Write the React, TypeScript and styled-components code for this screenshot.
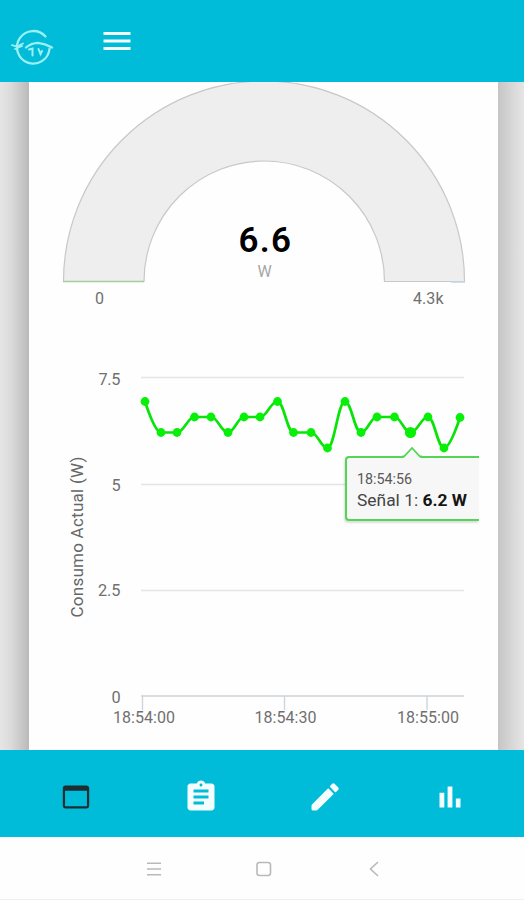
import React from "react";
import styled, { createGlobalStyle } from "styled-components";

const GlobalStyle = createGlobalStyle`
  *, *::before, *::after { box-sizing: border-box; }
  body { margin: 0; background: #fff; font-family: Roboto, "Liberation Sans", sans-serif; }
`;

const Screen = styled.div`
  display: flex;
  flex-direction: column;
  width: 524px;
  height: 900px;
  overflow: hidden;
`;

const Header = styled.header`
  display: flex;
  align-items: center;
  gap: 45px;
  height: 81.5px;
  flex: none;
  padding: 0 9px;
  background: #00bcd9;
  color: #effcff;
`;

const Logo = styled.svg`
  width: 45px;
  height: 42px;
  margin-top: 13px;
  fill: none;
  stroke: #9cf0f5;
  stroke-width: 2.3;
  stroke-linecap: round;
`;

const Icon = styled.svg<{ $tone?: string }>`
  display: block;
  width: 36px;
  height: 36px;
  fill: ${({ $tone }) => $tone ?? "#f4feff"};
`;

const Main = styled.main`
  flex: 1;
  min-height: 0;
  display: flex;
  padding: 0 26px 0 29px;
  overflow: hidden;
  background: linear-gradient(
    90deg,
    #e5e5e5 0,
    #dcdcdc 10px,
    #c9c9c9 21px,
    #b9b9b9 29px,
    #fff 29px,
    #fff 498px,
    #c5c5c5 498px,
    #cdcdcd 504px,
    #dadada 514px,
    #e5e5e5 524px
  );
`;

const Card = styled.section`
  display: flex;
  flex-direction: column;
  flex: 1;
  background: #fefefe;
`;

const GaugeDrawing = styled.svg`
  display: block;
  width: 469px;
  height: 248.5px;
  flex: none;
`;

const ChartArea = styled.div`
  position: relative;
  height: 420px;
  flex: none;
`;

const ChartDrawing = styled.svg`
  display: block;
  width: 469px;
  height: 420px;
`;

const Label = styled.text<{ $size?: number; $tone?: string; $weight?: number }>`
  font-family: Roboto, "Liberation Sans", sans-serif;
  font-size: ${({ $size }) => $size ?? 16}px;
  font-weight: ${({ $weight }) => $weight ?? 400};
  fill: ${({ $tone }) => $tone ?? "#707070"};
`;

const Tooltip = styled.div`
  position: absolute;
  left: 316px;
  top: 125.5px;
  width: 134px;
  height: 65px;
  padding: 12.5px 0 0 10px;
  border: 2px solid #55d455;
  border-right: 0;
  border-radius: 4px 0 0 4px;
  background: #f7f7f7;
  box-shadow: -1px 2px 2px rgba(0, 0, 0, 0.13);
  white-space: nowrap;
`;

const TooltipArrow = styled.svg`
  position: absolute;
  left: 54.5px;
  top: -11.5px;
  width: 20px;
  height: 12px;
`;

const TooltipTime = styled.div`
  font-size: 14.3px;
  line-height: 19px;
  color: #595959;
`;

const TooltipValue = styled.div`
  font-size: 17.4px;
  line-height: 22px;
  color: #444;

  b { font-weight: 700; color: #151515; }
`;

const BottomNav = styled.nav`
  display: grid;
  grid-template-columns: repeat(4, 1fr);
  align-items: center;
  height: 87px;
  padding: 6px 11.5px 0 13.5px;
  flex: none;
  background: #00bcd9;
`;

const NavButton = styled.button`
  display: flex;
  justify-content: center;
  padding: 0;
  border: 0;
  background: none;
`;

const SystemBar = styled.footer`
  display: flex;
  align-items: center;
  justify-content: center;
  gap: 86px;
  height: 63px;
  flex: none;
  padding: 2px 0 0 3px;
  background: #fefefe;
  border-bottom: 1px solid #efefef;
`;

const SystemIcon = styled.svg`
  width: 24px;
  height: 24px;
  fill: none;
  stroke: #b9b9b9;
  stroke-width: 1.6;
`;

type Point = [number, number];

const series: Point[] = [
  [145, 401.5], [161, 432.5], [177, 432.5], [194.5, 417], [211, 417],
  [228, 432.5], [244, 417], [260, 417], [277.5, 401.5], [293.5, 432.5],
  [311, 432.5], [327.5, 448], [345, 401.5], [361, 432.5], [377, 417],
  [394.5, 417], [410.5, 432.5], [428, 417], [444, 448], [460, 417.5],
];
const activeIndex = 16;

// Smooth curve whose control points never overshoot the neighbouring values.
function splinePath(points: Point[]): string {
  let path = `M${points[0][0]} ${points[0][1]}`;
  let out: Point = points[0];
  for (let i = 1; i < points.length; i++) {
    const [x, y] = points[i];
    const last = points[i - 1];
    const next = points[i + 1];
    let left: Point = [x, y];
    let right: Point = [x, y];
    if (next) {
      const lx = (1.5 * x + last[0]) / 2.5;
      let ly = (1.5 * y + last[1]) / 2.5;
      const rx = (1.5 * x + next[0]) / 2.5;
      let ry = (1.5 * y + next[1]) / 2.5;
      const shift = ((ry - ly) * (rx - x)) / (rx - lx) + y - ry;
      ly += shift;
      ry += shift;
      if (ly > last[1] && ly > y) {
        ly = Math.max(last[1], y);
        ry = 2 * y - ly;
      } else if (ly < last[1] && ly < y) {
        ly = Math.min(last[1], y);
        ry = 2 * y - ly;
      }
      if (ry > next[1] && ry > y) {
        ry = Math.max(next[1], y);
        ly = 2 * y - ry;
      } else if (ry < next[1] && ry < y) {
        ry = Math.min(next[1], y);
        ly = 2 * y - ry;
      }
      left = [lx, ly];
      right = [rx, ry];
    }
    path += ` C${out[0]} ${out[1]} ${left[0]} ${left[1]} ${x} ${y}`;
    out = right;
  }
  return path;
}

const yTicks = [
  { label: "7.5", y: 377.5, width: 22, baseline: 385 },
  { label: "5", y: 484.5, width: 9, baseline: 490.5 },
  { label: "2.5", y: 590.5, width: 22.5, baseline: 596 },
  { label: "0", y: 696, width: 9, baseline: 702.5 },
];
const xTicks = [
  { label: "18:54:00", x: 142.5, center: 144 },
  { label: "18:54:30", x: 284.5, center: 285.5 },
  { label: "18:55:00", x: 427, center: 428 },
];

const navItems = [
  { name: "Panel", tone: "#1d2e33", path: "M19 4.3H5c-1.11 0-1.8.8-1.8 1.8v11.8c0 1 .8 1.8 1.8 1.8h14c1 0 1.8-.8 1.8-1.8V6.1c0-1-.8-1.8-1.8-1.8zm.3 13.9H4.7V7.8h14.6v10.4z" },
  { name: "Registros", path: "M19 3h-4.18C14.4 1.84 13.3 1 12 1c-1.3 0-2.4.84-2.82 2H5c-1.1 0-2 .9-2 2v14c0 1.1.9 2 2 2h14c1.1 0 2-.9 2-2V5c0-1.1-.9-2-2-2zm-7 0c.55 0 1 .45 1 1s-.45 1-1 1-1-.45-1-1 .45-1 1-1zm2 14H7v-2h7v2zm3-4H7v-2h10v2zm0-4H7V7h10v2z" },
  { name: "Editar", path: "M3.5 16.75Q3 17.2 3 18V20Q3 21 4 21H6Q6.8 21 7.3 20.4L17.6 10.1Q17.8 9.9 17.6 9.7L14.4 6.4Q14.1 6.2 13.9 6.4zM20.8 7.2c.5-.5.5-1.1 0-1.6l-2.4-2.4c-.5-.5-1.1-.5-1.6 0l-1.4 1.4q-.4.4 0 .8l3.2 3.2q.4.4.8 0z" },
  { name: "Consumo", path: "M5 9.2h3.2V19H5zM10.4 5h3.2v14h-3.2zM15.9 13H19v6h-3.1z" },
];

function Gauge() {
  return (
    <GaugeDrawing viewBox="29 81.5 469 248.5">
      <path
        d="M63.5 281A200.5 200.5 0 0 1 464.5 281H384.5A120.25 120.5 0 0 0 144 281Z"
        fill="#eee"
        stroke="#c8c8c8"
        strokeWidth="1.2"
      />
      <path d="M63 281H144" stroke="#a5cba0" strokeWidth="1.4" />
      <path d="M451 281.5H465" stroke="#c6d5e3" strokeWidth="1.6" />
      <Label x="238.5" y="251.4" $size={35} $weight={600} $tone="#000" textLength={52.5}>6.6</Label>
      <Label x="264.5" y="276.4" textAnchor="middle" $size={16} $tone="#a6a6a6">W</Label>
      <Label x="99.5" y="303.4" textAnchor="middle">0</Label>
      <Label x="413" y="303.4" textLength={30.5}>4.3k</Label>
    </GaugeDrawing>
  );
}

function ConsumptionChart() {
  return (
    <ChartArea>
      <ChartDrawing viewBox="29 330 469 420">
        {yTicks.map(({ label, y, width, baseline }) => (
          <React.Fragment key={label}>
            <path d={`M141 ${y}H464`} stroke={label === "0" ? "#ccd0d5" : "#e4e4e4"} strokeWidth="1.5" />
            <Label x={120.5 - width} y={baseline} textLength={width} $size={16.3}>{label}</Label>
          </React.Fragment>
        ))}
        {xTicks.map(({ label, x, center }) => (
          <React.Fragment key={label}>
            <path d={`M${x} 696V710`} stroke="#cfd5da" strokeWidth="1.4" />
            <Label x={center - 31} y={723} textLength={62}>{label}</Label>
          </React.Fragment>
        ))}
        <Label transform="translate(83 617.5) rotate(-90)" textLength={161} $size={17} $tone="#666">
          Consumo Actual (W)
        </Label>
        <path d={splinePath(series)} fill="none" stroke="#08e408" strokeWidth="2.7" strokeLinejoin="round" />
        {series.map(([x, y], i) => (
          <circle key={x} cx={x} cy={y} r={i === activeIndex ? 5.6 : 4.4} fill="#08f008" />
        ))}
      </ChartDrawing>
      <Tooltip>
        <TooltipArrow viewBox="0 0 20 12">
          <path d="M1 12L10 2L19 12Z" fill="#f7f7f7" />
          <path d="M0 10.5H2L10 2L18 10.5H20" fill="none" stroke="#55d455" strokeWidth="1.8" />
        </TooltipArrow>
        <TooltipTime>18:54:56</TooltipTime>
        <TooltipValue>Señal 1: <b>6.2 W</b></TooltipValue>
      </Tooltip>
    </ChartArea>
  );
}

export default function App() {
  return (
    <Screen>
      <GlobalStyle />
      <Header>
        <Logo viewBox="9 26 45 42">
          <path d="M45.5 36.5A16.3 16.3 0 1 0 49.5 49" />
          <path d="M12 45.2L17 46.5L23 43.5M15 49L22 46" strokeWidth="1.8" />
          <path d="M26 47.5Q31 43 38 42.8Q45 43.5 52 47.5" />
          <path d="M29 49.5L32.5 48.5V55.5M38.5 49L40.5 54L42 51" strokeWidth="2" />
        </Logo>
        <Icon viewBox="0 0 24 24">
          <path d="M3 18h18v-2H3v2zm0-5h18v-2H3v2zm0-7v2h18V6H3z" />
        </Icon>
      </Header>
      <Main>
        <Card>
          <Gauge />
          <ConsumptionChart />
        </Card>
      </Main>
      <BottomNav>
        {navItems.map(({ name, tone, path }) => (
          <NavButton key={name} aria-label={name}>
            <Icon viewBox="0 0 24 24" $tone={tone}><path d={path} /></Icon>
          </NavButton>
        ))}
      </BottomNav>
      <SystemBar>
        <SystemIcon viewBox="0 0 24 24"><path d="M5 6.2H19M5 12H19M5 17.8H19" /></SystemIcon>
        <SystemIcon viewBox="0 0 24 24"><rect x="5" y="5.5" width="13.5" height="13" rx="2.5" /></SystemIcon>
        <SystemIcon viewBox="0 0 24 24"><path d="M16 5L8.5 12L16 19" /></SystemIcon>
      </SystemBar>
    </Screen>
  );
}
